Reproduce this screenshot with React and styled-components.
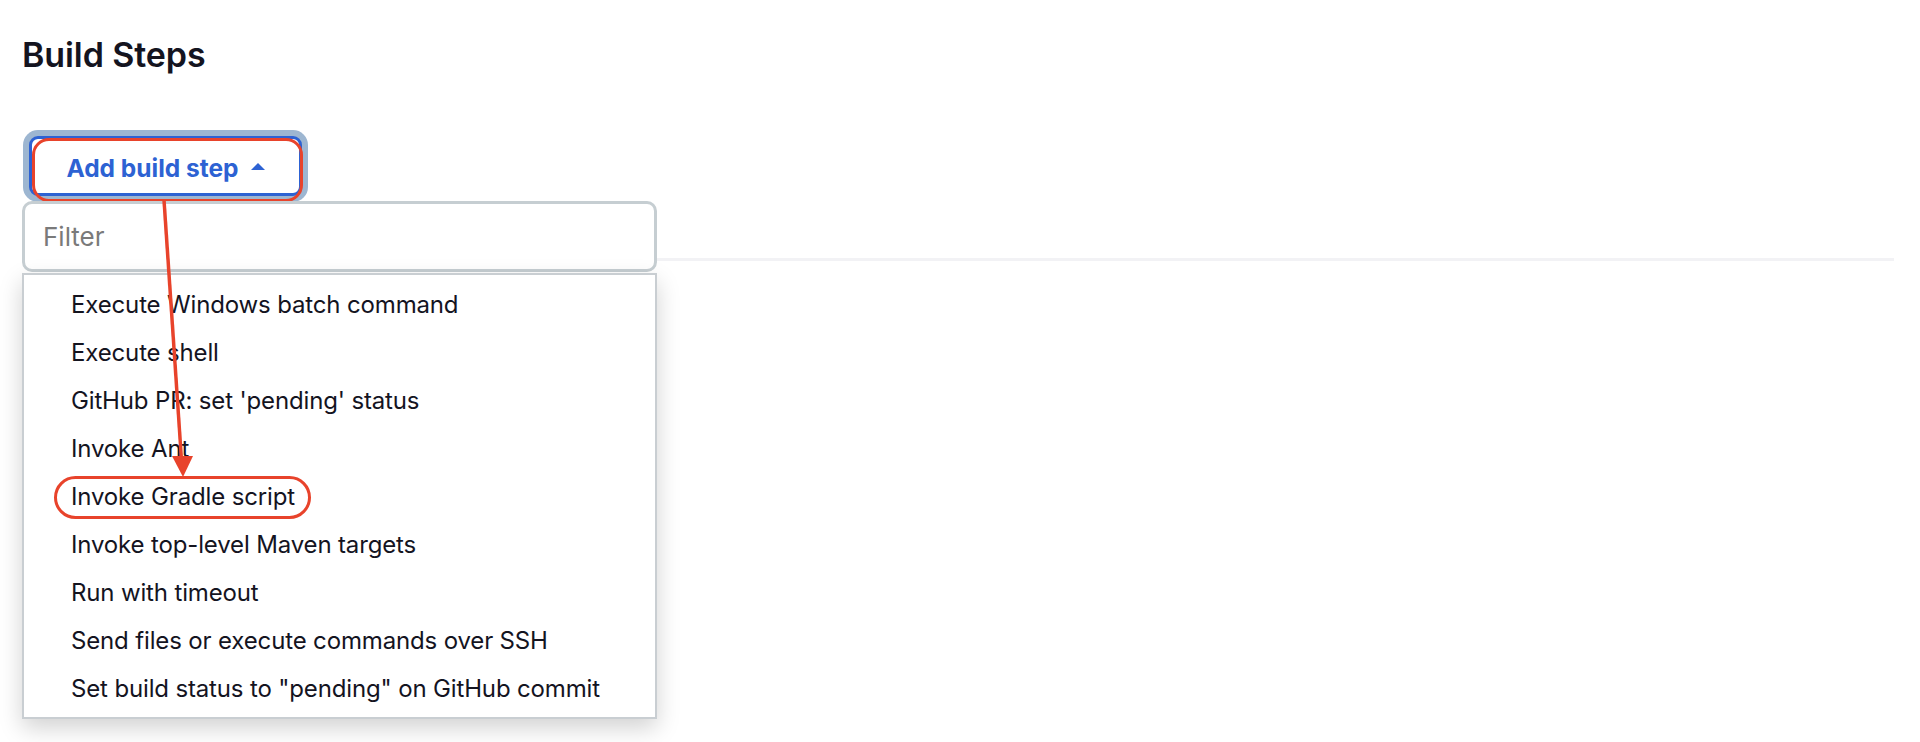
import React from "react";
import styled, { createGlobalStyle } from "styled-components";

const GlobalStyle = createGlobalStyle`
  html, body {
    margin: 0;
    padding: 0;
    background: #ffffff;
  }
  body {
    font-family: "Inter", "Noto Sans", sans-serif;
    color: #14141f;
  }
  * { box-sizing: border-box; }
`;

const Page = styled.div`
  position: relative;
  width: 1920px;
  height: 742px;
  padding: 35px 26px 0 22px;
  overflow: hidden;
`;

const Title = styled.h2`
  margin: 0;
  font-size: 34px;
  line-height: 40px;
  font-weight: 600;
  color: #14141f;
  letter-spacing: -0.1px;
`;

const StepArea = styled.div`
  position: relative;
  margin-top: 61px;
`;

const ButtonRow = styled.div`
  display: flex;
  padding-left: 7px;
`;

const AddButton = styled.button`
  position: relative;
  display: flex;
  align-items: center;
  justify-content: center;
  gap: 12px;
  width: 273px;
  height: 60px;
  padding: 3px 0 0;
  border: 3px solid #2d62d3;
  border-radius: 9px;
  background: #ffffff;
  box-shadow: 0 0 0 6px #9db6d1;
  color: #2d62d3;
  font-family: "Inter", "Noto Sans", sans-serif;
  font-size: 24.5px;
  font-weight: 700;
  letter-spacing: 0;
  cursor: pointer;
`;

const Caret = styled.span`
  width: 0;
  height: 0;
  border-left: 7.5px solid transparent;
  border-right: 7.5px solid transparent;
  border-bottom: 7px solid #2d62d3;
  margin-top: -2px;
`;

const Ring = styled.span`
  position: absolute;
  border: 3.5px solid #e8432b;
  pointer-events: none;
  ${(p) => p.$css}
`;

const Divider = styled.div`
  margin-top: 62px;
  height: 3px;
  background: #f2f2f5;
`;

const Menu = styled.div`
  position: absolute;
  top: 65px;
  left: 0;
  width: 635px;
  display: flex;
  flex-direction: column;
  gap: 1px;
  z-index: 2;
`;

const FilterInput = styled.input`
  width: 100%;
  height: 71px;
  border: 3px solid #c6ced2;
  border-radius: 10px;
  padding: 0 18px;
  font-family: "Inter", "Noto Sans", sans-serif;
  font-size: 26px;
  color: #14141f;
  background: #fff;
  outline: none;
  &::placeholder {
    color: #7a7a7a;
  }
`;

const List = styled.ul`
  list-style: none;
  margin: 0;
  padding: 6px 0 4px;
  background: #ffffff;
  border: 2px solid #c9ced2;
  box-shadow: 0 9px 22px rgba(0, 0, 0, 0.18);
`;

const Item = styled.li`
  position: relative;
  height: 48px;
  line-height: 48px;
  padding-left: 47px;
  font-size: 24px;
  letter-spacing: -0.15px;
  color: #14141f;
  white-space: nowrap;
`;

const Overlay = styled.svg`
  position: absolute;
  top: 0;
  left: 0;
  pointer-events: none;
  z-index: 5;
`;

const items = [
  "Execute Windows batch command",
  "Execute shell",
  "GitHub PR: set 'pending' status",
  "Invoke Ant",
  "Invoke Gradle script",
  "Invoke top-level Maven targets",
  "Run with timeout",
  "Send files or execute commands over SSH",
  'Set build status to "pending" on GitHub commit',
];

export default function App() {
  return (
    <>
      <GlobalStyle />
      <Page>
        <Title>Build Steps</Title>
        <StepArea>
          <ButtonRow>
            <AddButton type="button">
              Add build step
              <Caret />
              <Ring $css="left: 0px; top: -1px; width: 271px; height: 64px; border-radius: 17px;" />
            </AddButton>
          </ButtonRow>
          <Divider />
          <Menu>
            <FilterInput placeholder="Filter" />
            <List>
              {items.map((label) => (
                <Item key={label}>
                  {label}
                  {label === "Invoke Gradle script" && (
                    <Ring $css="left: 30px; top: 3px; width: 257px; height: 43px; border-radius: 22px;" />
                  )}
                </Item>
              ))}
            </List>
          </Menu>
        </StepArea>
        <Overlay width="1920" height="742" viewBox="0 0 1920 742">
          <line x1="164" y1="200" x2="181.5" y2="460" stroke="#e8432b" strokeWidth="3.5" />
          <polygon points="172,456 193,456 183,477" fill="#e8432b" />
        </Overlay>
      </Page>
    </>
  );
}
